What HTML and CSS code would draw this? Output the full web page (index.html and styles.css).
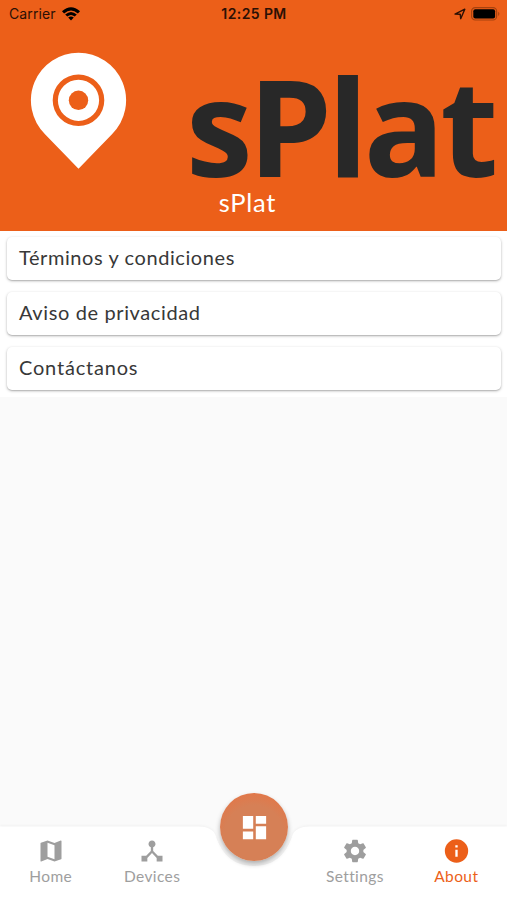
FILE: index.html
```html
<!DOCTYPE html>
<html lang="es">
<head>
<meta charset="utf-8">
<title>sPlat</title>
<link rel="stylesheet" href="styles.css">
</head>
<body>
<div class="app">
  <header class="header">
    <div class="status">
      <div class="carrier"><span>Carrier</span>
        <svg width="18" height="14" viewBox="0 0 18 14"><path d="M0 4.3Q9-3.6 18 4.3L15.9 6.5Q9 .6 2.1 6.5ZM3.2 7.5Q9 2.4 14.8 7.5L12.7 9.6Q9 6.4 5.3 9.6ZM6.2 10.6Q9 8.4 11.8 10.6L9 13.5Z"/></svg>
      </div>
      <span class="time">12:25 PM</span>
      <div class="indicators">
        <svg width="12" height="12" viewBox="0 0 12 12"><path d="M1 6.1L10.8 1.2L6.7 10.7L6.2 6.2Z" fill="none" stroke="#2b1005" stroke-width="1.4" stroke-linejoin="round"/></svg>
        <svg width="30" height="14" viewBox="0 0 30 14"><rect x=".6" y=".6" width="25" height="12.4" rx="3.6" fill="none" stroke="#a6420f" stroke-width="1.2"/><rect x="2.3" y="2.3" width="21.8" height="9.2" rx="2"/><path d="M27.2 4.7Q29.6 6.8 27.2 8.9Z" fill="#a6420f"/></svg>
      </div>
    </div>
    <div class="brand">
      <svg class="pin" width="97" height="117" viewBox="0 0 97 117"><path d="M48.5.7A47.6 47.6 0 0 1 82.2 81.9L48.5 116.7L14.8 81.9A47.6 47.6 0 0 1 48.5.7Z" fill="#fff"/><circle cx="48.5" cy="48.3" r="23.2" fill="none" stroke="#ec5f19" stroke-width="5.2"/><circle cx="48.5" cy="48.3" r="9.7" fill="#ec5f19"/></svg>
      <div class="wordmark">sPlat</div>
    </div>
    <h1 class="title">sPlat</h1>
  </header>
  <main class="content">
    <div class="list">
      <div class="card"><span class="terms">Términos y condiciones</span></div>
      <div class="card"><span class="privacy">Aviso de privacidad</span></div>
      <div class="card"><span class="contact">Contáctanos</span></div>
    </div>
  </main>
  <nav class="nav">
    <svg class="nav-shape" width="507" height="80" viewBox="0 -6 507 80"><path d="M-5 .5H199Q211 .5 215 8C221 26 231 40 254 40C277 40 287 26 293 8Q297 .5 309 .5H512V80H-5Z" fill="#fff"/></svg>
    <div class="tab"><svg width="28" height="28" viewBox="0 0 24 24"><path d="M20.5 3l-.16.03L15 5.1 9 3 3.36 4.9c-.21.07-.36.25-.36.48V20.5c0 .28.22.5.5.5l.16-.03L9 18.9l6 2.1 5.64-1.9c.21-.07.36-.25.36-.48V3.5c0-.28-.22-.5-.5-.5zM15 19l-6-2.11V5l6 2.11V19z"/></svg><span class="home">Home</span></div>
    <div class="tab"><svg width="28" height="28" viewBox="0 0 24 24"><path d="M17 16l-4-4V8.82C14.16 8.4 15 7.3 15 6c0-1.66-1.34-3-3-3S9 4.34 9 6c0 1.3.84 2.4 2 2.82V12l-4 4H3v5h5v-3.05l4-4.2 4 4.2V21h5v-5h-4z"/></svg><span class="devices">Devices</span></div>
    <div class="fab"><svg width="31" height="31" viewBox="0 0 24 24"><path d="M3 13h8V3H3v10zm0 8h8v-6H3v6zm10 0h8V11h-8v10zm0-18v6h8V3h-8z"/></svg></div>
    <div class="tab"><svg width="28" height="28" viewBox="0 0 24 24"><path d="M19.14 12.94c.04-.3.06-.61.06-.94 0-.32-.02-.64-.07-.94l2.03-1.58c.18-.14.23-.41.12-.61l-1.92-3.32c-.12-.22-.37-.29-.59-.22l-2.39.96c-.5-.38-1.03-.7-1.62-.94L14.4 2.81c-.04-.24-.24-.41-.48-.41h-3.84c-.24 0-.43.17-.47.41L9.25 5.35C8.66 5.59 8.12 5.92 7.63 6.29L5.24 5.33c-.22-.08-.47 0-.59.22L2.74 8.87c-.12.21-.08.47.12.61l2.03 1.58c-.05.3-.09.63-.09.94s.02.64.07.94l-2.03 1.58c-.18.14-.23.41-.12.61l1.92 3.32c.12.22.37.29.59.22l2.39-.96c.5.38 1.03.7 1.62.94l.36 2.54c.05.24.24.41.48.41h3.84c.24 0 .44-.17.47-.41l.36-2.54c.59-.24 1.13-.56 1.62-.94l2.39.96c.22.08.47 0 .59-.22l1.92-3.32c.12-.22.07-.47-.12-.61l-2.01-1.58zM12 15.6c-1.98 0-3.6-1.62-3.6-3.6s1.62-3.6 3.6-3.6 3.6 1.62 3.6 3.6-1.62 3.6-3.6 3.6z"/></svg><span class="settings">Settings</span></div>
    <div class="tab active"><svg width="29" height="28" viewBox="0 0 24 24"><path d="M12 2a10 10 0 1 0 0 20a10 10 0 0 0 0-20zm1 15h-2v-6h2v6zm0-8h-2V7h2v2z"/></svg><span class="about">About</span></div>
  </nav>
</div>
</body>
</html>
```
FILE: styles.css
```css
* { box-sizing: border-box; }
body { margin: 0; font-family: Lato, "Open Sans", sans-serif; background: #fafafa; }
.app { width: 507px; height: 900px; display: flex; flex-direction: column; overflow: hidden; }
.header { height: 231px; background: #ec5f19; display: flex; flex-direction: column; flex-shrink: 0; }
.status { height: 28px; display: grid; grid-template-columns: 1fr auto 1fr; align-items: center; padding: 0 6px 1px 9px; font: 14px/28px Inter, sans-serif; color: #2b1005; }
.carrier { display: flex; align-items: center; gap: 6px; }
.carrier span { letter-spacing: .1px; }
.time { font-weight: 600; font-size: 14px; letter-spacing: .4px; margin-right: 2px; }
.indicators { display: flex; align-items: center; justify-content: flex-end; gap: 5px; }
.brand { display: flex; height: 160px; padding-left: 30px; }
.pin { margin-top: 24px; flex-shrink: 0; }
.wordmark { margin-left: 59px; margin-top: 38px; font: bold 134px/118px "Open Sans", sans-serif; letter-spacing: -4.6px; color: #282828; white-space: nowrap; height: 118px; }
.title { margin: 0; padding-right: 12px; text-align: center; color: #fff; font: 400 25.5px/28px Lato, sans-serif; letter-spacing: .8px; }
.content { flex: 1; background: #fafafa; }
.list { background: #fff; padding: 6px 6px 7px 7px; display: flex; flex-direction: column; gap: 12px; height: 166px; }
.card { height: 43px; flex-shrink: 0; border-radius: 5px; background: #fff; box-shadow: 0 1px 3px rgba(0,0,0,.28), 0 1px 1px rgba(0,0,0,.1); padding-left: 12px; font-size: 20px; line-height: 40px; color: #383838; white-space: nowrap; }
.nav { position: relative; height: 74px; display: grid; grid-template-columns: repeat(5, 1fr); }
.nav-shape { position: absolute; left: 0; top: -6px; filter: drop-shadow(0 -1px 1px rgba(0,0,0,.04)); }
.tab { position: relative; display: flex; flex-direction: column; align-items: center; padding-top: 11px; color: #9e9e9e; font-size: 15.5px; line-height: 18px; white-space: nowrap; }
.tab span { margin-top: 2px; letter-spacing: .4px; }
.tab svg, .fab svg { fill: currentColor; flex-shrink: 0; }
.tab.active { color: #ec5f19; }
.fab { position: relative; justify-self: center; margin: -33px -1px 0 1px; width: 68px; height: 68px; border-radius: 50%; background: radial-gradient(circle at 50% 62%, #d68056 55%, #e1784a 78%); color: #fff; display: flex; align-items: center; justify-content: center; box-shadow: 0 3px 5px rgba(0,0,0,.3); }
.terms { letter-spacing: .58px; }
.privacy { letter-spacing: .62px; }
.contact { letter-spacing: .8px; }
```
